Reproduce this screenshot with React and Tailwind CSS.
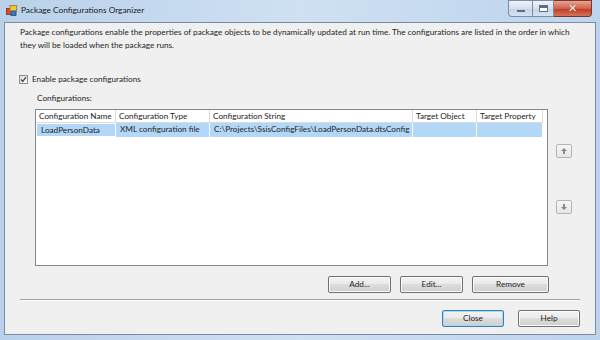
import React from "react";

const font = { fontFamily: 'Lato, "Open Sans", sans-serif' };

function Btn({ children, w, def }) {
  return (
    <div
      className={`flex items-center justify-center h-[17px] rounded-[2px] border text-[8.2px] text-[#1e1e1e] ${def ? "border-[#3c7fb1] shadow-[inset_0_0_0_1px_#a6d9f4]" : "border-[#707070] shadow-[inset_0_0_0_1px_#fbfbfb]"} bg-[linear-gradient(#f2f2f2_0%,#ebebeb_45%,#dddddd_50%,#cfcfcf_100%)]`}
      style={{ width: w }}
    >
      {children}
    </div>
  );
}

function SmallBtn({ down }) {
  return (
    <div className="w-[16px] h-[14px] rounded-[2px] border border-[#b5b5b5] bg-[linear-gradient(#f6f6f6,#e6e6e6)] flex items-center justify-center">
      <svg width="6" height="6" viewBox="0 0 6 6">
        {down ? (
          <path d="M2 0h2v3h2L3 6 0 3h2z" fill="#8a8a8a" />
        ) : (
          <path d="M2 6h2V3h2L3 0 0 3h2z" fill="#8a8a8a" />
        )}
      </svg>
    </div>
  );
}

export default function App() {
  const cols = [
    ["Configuration Name", 80],
    ["Configuration Type", 94],
    ["Configuration String", 203],
    ["Target Object", 64],
    ["Target Property", 66],
  ];
  const row = ["LoadPersonData", "XML configuration file", "C:\\Projects\\SsisConfigFiles\\LoadPersonData.dtsConfig", "", ""];
  return (
    <div className="w-[600px] h-[340px] flex flex-col bg-[linear-gradient(90deg,#b9d1ea_0%,#cfe0f3_50%,#bcd4ed_100%)] overflow-hidden" style={font}>
      {/* Title bar */}
      <div className="h-[22px] flex items-start relative">
        <div className="flex items-center h-[20px] pl-[6px]">
          <svg width="11" height="11" viewBox="0 0 11 11">
            <rect x="0.5" y="3.5" width="6" height="6" fill="#d84a2c" stroke="#8d2a14" strokeWidth="0.8" />
            <rect x="4" y="0.5" width="6.5" height="6" fill="#f3c43b" stroke="#a07a10" strokeWidth="0.8" />
            <rect x="5" y="6" width="5" height="4.5" fill="#3a79c8" stroke="#1d4c8a" strokeWidth="0.8" />
          </svg>
          <span className="ml-[4px] text-[8.3px] text-[#1a1a1a]">Package Configurations Organizer</span>
        </div>
        <div className="ml-auto mr-[8px] flex h-[17px]">
          <div className="w-[24px] h-[17px] border border-[#7d8ca2] border-r-0 rounded-bl-[4px] bg-[linear-gradient(#eef3fa,#d3e0ef_50%,#c2d3e8_51%,#d5e3f2)] flex items-center justify-center">
            <div className="w-[8px] h-[2px] bg-white border border-[#5d6d85] mt-[5px]" />
          </div>
          <div className="w-[22px] h-[17px] border border-[#7d8ca2] bg-[linear-gradient(#eef3fa,#d3e0ef_50%,#c2d3e8_51%,#d5e3f2)] flex items-center justify-center">
            <div className="w-[9px] h-[7px] border border-[#5d6d85] bg-white shadow-[inset_0_2px_0_#5d6d85]" />
          </div>
          <div className="w-[38px] h-[17px] border border-[#7a3429] border-l-0 rounded-br-[4px] bg-[linear-gradient(#e8a493,#d0614a_50%,#c0381e_51%,#d5735b)] flex items-center justify-center">
            <span className="text-white text-[11px] font-bold leading-none" style={{ fontFamily: '"DejaVu Sans", sans-serif', textShadow: "0 0 1px #5a1a10" }}>✕</span>
          </div>
        </div>
      </div>
      {/* Client */}
      <div className="mx-[4px] mb-[5px] flex-1 border border-[#7a8ca3] bg-[#f0f0f0] flex flex-col text-[8.2px] text-[#1e1e1e] leading-[13px]">
        <div className="pl-[15px] pt-[3px]">
          <div className="whitespace-nowrap">Package configurations enable the properties of package objects to be dynamically updated at run time. The configurations are listed in the order in which</div>
          <div>they will be loaded when the package runs.</div>
        </div>
        <div className="flex items-center pl-[14px] mt-[21px]">
          <div className="w-[9px] h-[9px] border border-[#8e8f8f] bg-[linear-gradient(135deg,#dcdcdc,#ffffff)] flex items-center justify-center">
            <svg width="7" height="7" viewBox="0 0 7 7">
              <path d="M1 3.5 L2.8 5.5 L6 1.2" fill="none" stroke="#3a4f75" strokeWidth="1.4" />
            </svg>
          </div>
          <span className="ml-[4px]">Enable package configurations</span>
        </div>
        <div className="pl-[32px] mt-[6px]">Configurations:</div>
        <div className="flex mt-[4px]">
          <div className="ml-[30px] w-[513px] h-[157px] border border-[#828790] bg-white">
            <div className="flex h-[13px] bg-white">
              {cols.map(([c, w], i) => (
                <div key={i} className="border-r border-b border-[#dcdcdc] pl-[3px] leading-[12px] whitespace-nowrap overflow-hidden" style={{ width: w }}>
                  {c}
                </div>
              ))}
            </div>
            <div className="flex h-[14px] bg-[#b3d7f7] w-[507px]">
              {row.map((c, i) => (
                <div
                  key={i}
                  className={`pl-[4px] leading-[13px] whitespace-nowrap overflow-hidden border-r border-white ${i === 0 ? "border border-[#6a6a6a]" : ""}`}
                  style={{ width: cols[i][1] }}
                >
                  {c}
                </div>
              ))}
            </div>
          </div>
          <div className="ml-[8px] flex flex-col">
            <div className="mt-[35px]"><SmallBtn /></div>
            <div className="mt-[42px]"><SmallBtn down /></div>
          </div>
        </div>
        <div className="flex mt-[10px] pl-[323px] gap-[9px]">
          <Btn w={63}>Add...</Btn>
          <Btn w={63}>Edit...</Btn>
          <Btn w={77}>Remove</Btn>
        </div>
        <div className="mx-[15px] mt-[6px] h-[2px] border-t border-[#a0a0a0] border-b border-b-white" />
        <div className="flex mt-[9px] pl-[437px] gap-[14px]">
          <Btn w={62} def>Close</Btn>
          <Btn w={62}>Help</Btn>
        </div>
      </div>
    </div>
  );
}
